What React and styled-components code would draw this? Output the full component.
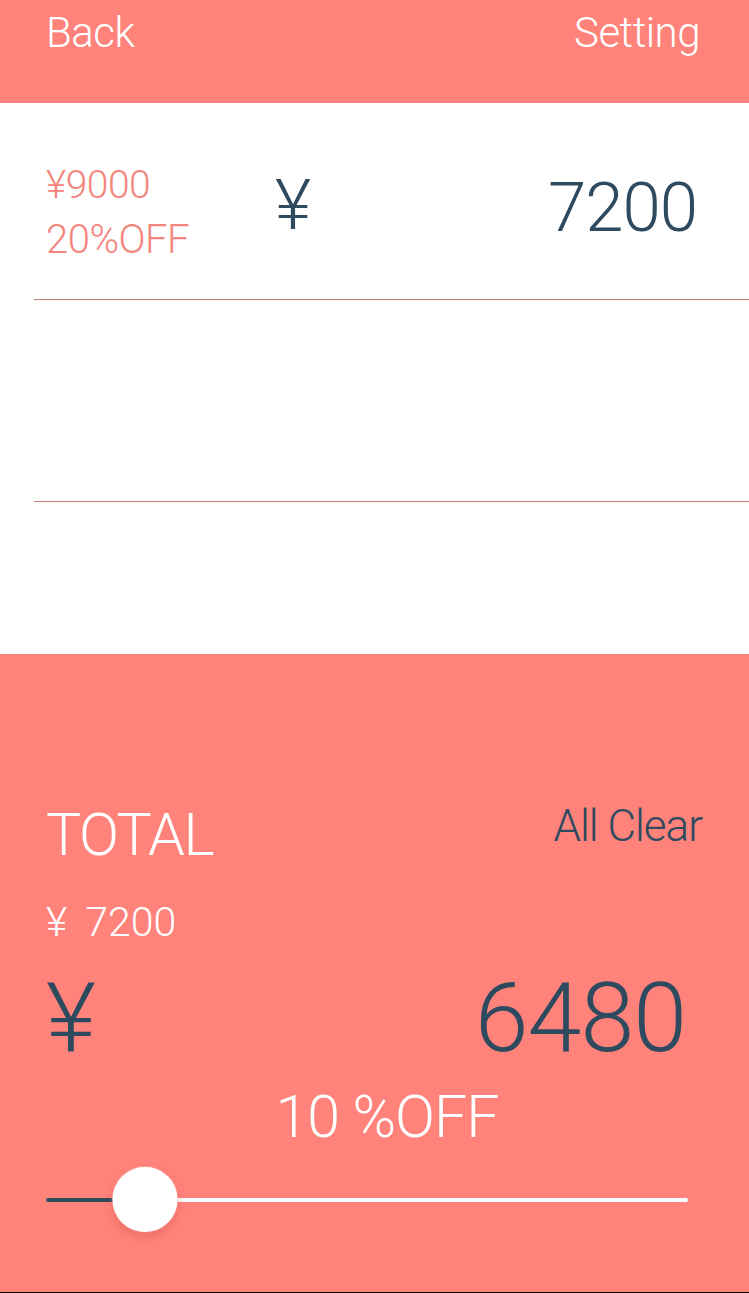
import React, { useState } from "react";
import styled, { createGlobalStyle } from "styled-components";

const PINK = "#ff837b";
const NAVY = "#2d4a5f";

const GlobalStyle = createGlobalStyle`
  html, body {
    margin: 0;
    padding: 0;
    background: #fff;
  }
  body {
    font-family: "Helvetica Neue", Roboto, "Liberation Sans", sans-serif;
    font-weight: 300;
  }
`;

const Screen = styled.div`
  width: 749px;
  height: 1293px;
  display: flex;
  flex-direction: column;
  overflow: hidden;
`;

const NavBar = styled.header`
  height: 103px;
  flex: none;
  background: ${PINK};
  display: flex;
  justify-content: space-between;
  align-items: flex-start;
  padding: 12px 49px 0 46px;
  box-sizing: border-box;
`;

const NavButton = styled.span`
  color: #fff;
  font-size: 42px;
  line-height: 1;
  letter-spacing: -0.5px;
`;

const List = styled.div`
  flex: 1;
  background: #fff;
`;

const Row = styled.div`
  height: ${(p) => p.$height}px;
  margin-left: 34px;
  border-bottom: 1px solid #c77d78;
  display: flex;
  align-items: flex-start;
  padding: 63px 52px 0 12px;
  box-sizing: border-box;
`;

const Discount = styled.div`
  width: 229px;
  display: flex;
  flex-direction: column;
  gap: 15px;
  color: #f3857d;
`;

const DiscountLine = styled.span`
  font-size: ${(p) => p.$size}px;
  line-height: 1;
  letter-spacing: -0.5px;
`;

const Yen = styled.span`
  color: ${(p) => p.$color || NAVY};
  font-size: ${(p) => p.$size}px;
  line-height: 1;
  margin-top: ${(p) => p.$offset || 0}px;
`;

const Amount = styled.span`
  flex: 1;
  text-align: right;
  color: ${NAVY};
  font-size: ${(p) => p.$size}px;
  line-height: 1;
  margin-top: ${(p) => p.$offset || 0}px;
  letter-spacing: -1px;
`;

const Summary = styled.section`
  height: 639px;
  flex: none;
  background: ${PINK};
  border-bottom: 1px solid #000;
  display: flex;
  flex-direction: column;
  padding: 151px 47px 0 46px;
  box-sizing: border-box;
`;

const SummaryHead = styled.div`
  display: flex;
  justify-content: space-between;
  align-items: flex-start;
`;

const TotalLabel = styled.span`
  color: #fff;
  font-size: 59px;
  line-height: 1;
  letter-spacing: -1.5px;
`;

const ClearButton = styled.button`
  border: 0;
  background: none;
  padding: 0;
  margin-top: -1px;
  font: inherit;
  color: ${NAVY};
  font-size: 44px;
  line-height: 1;
  letter-spacing: -1px;
  cursor: pointer;
`;

const Subtotal = styled.div`
  margin-top: 38px;
  color: #fff;
  font-size: 41px;
  line-height: 1;
  display: flex;
  gap: 18px;
`;

const GrandTotal = styled.div`
  margin-top: 27px;
  display: flex;
  align-items: flex-start;
  padding-right: 16px;
`;

const RateLabel = styled.div`
  margin-top: 20px;
  padding-left: 26px;
  text-align: center;
  color: #fff;
  font-size: 59px;
  line-height: 1;
  letter-spacing: -1px;
`;

const Slider = styled.div`
  margin-top: 21px;
  height: 66px;
  width: 642px;
  position: relative;
  display: flex;
  align-items: center;
`;

const Track = styled.div`
  height: 4px;
  width: 100%;
  border-radius: 2px;
  background: #fff;
  overflow: hidden;
`;

const Fill = styled.div`
  height: 100%;
  background: ${NAVY};
`;

const Thumb = styled.div`
  position: absolute;
  top: 0;
  width: 65px;
  height: 65px;
  border-radius: 50%;
  background: #fff;
  box-shadow: 0 4px 10px rgba(200, 60, 50, 0.35), 0 0 2px rgba(255, 255, 255, 0.8);
  transform: translateX(-50%);
`;

export default function App() {
  const [rate] = useState(10);
  const thumbX = 99;

  return (
    <>
      <GlobalStyle />
      <Screen>
        <NavBar>
          <NavButton>Back</NavButton>
          <NavButton>Setting</NavButton>
        </NavBar>

        <List>
          <Row $height={197}>
            <Discount>
              <DiscountLine $size={39}>¥9000</DiscountLine>
              <DiscountLine $size={40}>20%OFF</DiscountLine>
            </Discount>
            <Yen $size={70} $offset={4}>¥</Yen>
            <Amount $size={69} $offset={7}>7200</Amount>
          </Row>
          <Row $height={202} />
        </List>

        <Summary>
          <SummaryHead>
            <TotalLabel>TOTAL</TotalLabel>
            <ClearButton>All Clear</ClearButton>
          </SummaryHead>
          <Subtotal>
            <span>¥</span>
            <span>7200</span>
          </Subtotal>
          <GrandTotal>
            <Yen $size={97}>¥</Yen>
            <Amount $size={97}>6480</Amount>
          </GrandTotal>
          <RateLabel>{rate} %OFF</RateLabel>
          <Slider>
            <Track>
              <Fill style={{ width: thumbX }} />
            </Track>
            <Thumb style={{ left: thumbX }} />
          </Slider>
        </Summary>
      </Screen>
    </>
  );
}
